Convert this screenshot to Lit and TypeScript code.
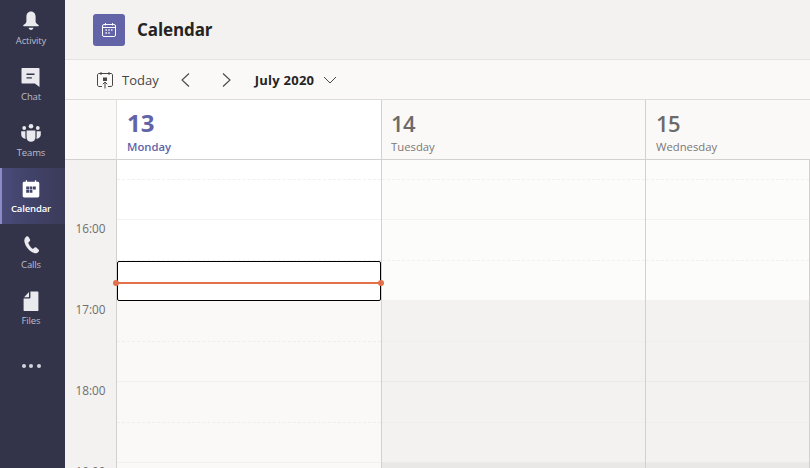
import { LitElement, html, css, svg } from "lit";
import { customElement } from "lit/decorators.js";

const icons: Record<string, unknown> = {
  bell: svg`<path d="M10 0.600c-3 0-4.600 2.300-4.600 5.200v4.800c0 1.100-.9 2.100-2.900 3.400-.5.3-.5 1.200.3 1.200h14.400c.8 0 .8-.9.3-1.200-2-1.300-2.900-2.300-2.900-3.400V5.800c0-2.900-1.600-5.200-4.600-5.200z"/><path d="M7.600 16.800h4.800c-.2 1.300-1.100 2.200-2.400 2.200s-2.200-.9-2.400-2.200z"/>`,
  chat: svg`<path fill-rule="evenodd" d="M1.500 1h16c.6 0 1 .4 1 1v18l-4.600-3.400H1.500c-.6 0-1-.4-1-1V2c0-.6.4-1 1-1zM5.500 6.600v1.300h8V6.600zm0 3.600v1.300h5.400v-1.300z"/>`,
  teams: svg`<circle cx="10" cy="3.200" r="2.300"/><circle cx="3.200" cy="5" r="1.900"/><circle cx="16.800" cy="5" r="1.900"/><path d="M5.600 7.400h8.800v7c0 2.500-2 4.400-4.400 4.400s-4.400-1.900-4.400-4.400z"/><path d="M.2 8.200h4.200v5.600c0 .8.100 1.400.4 2C2.300 15.600.2 14 .2 11.500zM15.600 8.200h4.200v3.300c0 2.500-2.100 4.100-4.600 4.300.3-.6.4-1.200.4-2z"/>`,
  cal: svg`<path fill-rule="evenodd" d="M4.800 1.200h1.300v1.500h7.800V1.200h1.300v1.500h1.500c1 0 1.600.7 1.600 1.600v12.400c0 1-.7 1.700-1.600 1.700H3.300c-1 0-1.600-.7-1.600-1.700V4.300c0-.9.6-1.600 1.600-1.600h1.500zM5.200 7.600v2.800h2.800V7.600zm3.400 0v2.800h2.800V7.600zm3.400 0v2.800h2.800V7.600zm-6.800 3.400v2.800h2.800V11zm3.400 0v2.800h2.800V11z"/>`,
  phone: svg`<path d="M5.400 1.400c.9-.5 1.700-.3 2.200.5l1.300 2.300c.5.8.3 1.500-.3 2.100l-1 1c-.3.3-.3.6-.2 1 .9 2.300 2.100 3.900 4 5.400.4.2.7.2 1-.1l1-.8c.7-.6 1.500-.6 2.100 0l2 1.800c.7.7.7 1.500 0 2.200-1.200 1.300-2.700 1.900-4.300 1.300C8.100 16 4.600 11.800 3.400 6.700c-.4-2.200.4-4.100 2-5.300z"/>`,
  file: svg`<path d="M9.400 0.600h7c.6 0 1 .4 1 1v17.600c0 .6-.4 1-1 1H3.600c-.6 0-1-.4-1-1V7.600h5.800c.6 0 1-.4 1-1z"/><path d="M8 1.100V5.800c0 .2-.2.400-.4.400H3.100z"/>`,
};

const nav = [
  ["bell", "Activity"],
  ["chat", "Chat"],
  ["teams", "Teams"],
  ["cal", "Calendar"],
  ["phone", "Calls"],
  ["file", "Files"],
];

const slots = [
  { h: 20, k: "dash" }, { h: 40, k: "solid" }, { h: 41, k: "dash" }, { h: 40, k: "solid" },
  { h: 41, k: "dash" }, { h: 40, k: "solid" }, { h: 41, k: "dash" }, { h: 40, k: "solid" },
];

@customElement("app-root")
export class AppRoot extends LitElement {
  static styles = css`
    :host { display: flex; width: 810px; height: 468px; overflow: hidden; font-family: "Open Sans", "Noto Sans", sans-serif; color: #252423; background: #f3f2f1; }
    .rail { width: 65px; flex: none; background: #33344a; display: flex; flex-direction: column; }
    .nav { height: 56px; box-sizing: border-box; display: flex; flex-direction: column; align-items: center; padding: 11px 3px 0 0; color: #bdbdc9; font-size: 9.500px; line-height: 13px; letter-spacing: -0.15px; }
    .nav svg { width: 20px; height: 20px; fill: #e9e9ee; margin-bottom: 3px; }
    .nav.active { color: #fff; background: linear-gradient(90deg, #4a4b78 0%, #3f4064 60%, #3b3c5a 100%); border-left: 2px solid #8b8cc7; padding-right: 5px; font-weight: 600; }
    .nav.active svg { fill: #fff; }
    .dots { display: flex; justify-content: center; gap: 3.500px; padding: 28px 3px 0 0; }
    .dots i { width: 4px; height: 4px; border-radius: 50%; background: #d4d4dc; }
    .main { flex: 1; min-width: 0; display: flex; flex-direction: column; }
    .head { height: 59px; flex: none; display: flex; align-items: center; gap: 12px; padding: 0 0 0 28px; border-bottom: 1px solid #e4e3e2; }
    .logo { width: 32px; height: 32px; border-radius: 3px; background: #6264a7; display: flex; align-items: center; justify-content: center; margin-top: 1px; }
    .logo svg { width: 16px; height: 16px; }
    .title { font-size: 17px; font-weight: 700; line-height: 22px; letter-spacing: -0.1px; margin-top: 1px; }
    .tools { height: 39px; flex: none; background: #faf9f8; border-bottom: 1px solid #dddcdb; display: flex; align-items: center; padding-left: 31px; font-size: 13px; color: #484644; }
    .today { width: 18px; height: 18px; margin-right: 8px; }
    .chev { width: 12px; height: 16px; }
    .prev { margin-left: 20px; }
    .next { margin-left: 30px; }
    .month { margin-left: 22px; font-weight: 700; color: #252423; letter-spacing: 0.25px; }
    .down { width: 14px; height: 8px; margin-left: 9px; }
    .cols { display: grid; grid-template-columns: 52px 265px 264px 1fr; }
    .dayhead { height: 60px; box-sizing: border-box; border-bottom: 1px solid #d2d1d0; background: #faf9f8; padding: 7px 0 0 10px; color: #6b6a69; }
    .dayhead.first { border-right: 1px solid #e1dfdd; }
    .dayhead.day { border-right: 1px solid #d2d1d0; }
    .dayhead.tue { padding-left: 9px; }
    .dayhead.on { background: #fff; color: #6264a7; }
    .num { font-size: 22px; line-height: 32px; font-weight: 600; letter-spacing: -0.6px; }
    .dayhead.on .num { font-weight: 700; font-size: 24px; letter-spacing: 0; }
    .dow { font-size: 11.300px; line-height: 16px; color: #7a7876; }
    .dayhead.on .dow { color: #6264a7; font-weight: 600; }
    .grid { height: 308px; position: relative; overflow: hidden; }
    .gutter { background: #f3f2f1; border-right: 1px solid #d2d1d0; padding-top: 60px; display: flex; flex-direction: column; align-items: center; font-size: 11.800px; color: #706e6c; }
    .gutter span { height: 81px; flex: none; line-height: 17px; }
    .col { border-right: 1px solid #d2d1d0; background: #fcfcfb; display: flex; flex-direction: column; }
    .col.on { background: #fff; }
    .slot { box-sizing: border-box; flex: none; }
    .slot.solid { border-bottom: 1px solid #f3f2f1; }
    .slot.dash { border-bottom: 1px dashed #f1f0ef; }
    .slot.after { background: #f3f2f1; }
    .slot.after.solid { border-bottom-color: #ebeae9; }
    .slot.after.dash { border-bottom: 1px solid #efeeed; }
    .col.on .slot.after { background: #faf9f8; }
    .col.on .slot.after.solid { border-bottom-color: #f1f0ef; }
    .col.on .slot.after.dash { border-bottom: 1px dashed #efeeed; }
    .rest { flex: 1; background: #e9e8e7; }
    .col.on .rest { background: #faf9f8; }
    .sel { position: absolute; left: 52px; top: 101px; width: 264px; height: 40px; box-sizing: border-box; border: 1px solid #000; border-radius: 2px; background: #fff; }
    .now { position: absolute; left: 51px; top: 122px; width: 265px; height: 2px; background: #e2714a; }
    .now::before, .now::after { content: ""; position: absolute; top: -2px; width: 6px; height: 6px; border-radius: 50%; background: #e2714a; }
    .now::before { left: -3px; }
    .now::after { right: -3px; }
  `;

  private column(on: boolean) {
    let y = 160;
    return html`<div class="col ${on ? "on" : ""}">
      ${slots.map((s) => {
        const after = y >= 300;
        y += s.h;
        return html`<div class="slot ${s.k} ${after ? "after" : ""}" style="height:${s.h}px"></div>`;
      })}
      <div class="rest"></div>
    </div>`;
  }

  render() {
    return html`
      <nav class="rail">
        ${nav.map(([ic, label]) => html`<div class="nav ${label === "Calendar" ? "active" : ""}">
          <svg viewBox="0 0 20 20">${icons[ic]}</svg><span>${label}</span>
        </div>`)}
        <div class="dots"><i></i><i></i><i></i></div>
      </nav>
      <div class="main">
        <header class="head">
          <div class="logo">
            <svg viewBox="0 0 16 16" fill="none" stroke="#fff" stroke-width="1">
              <rect x="1.500" y="2.500" width="13" height="12" rx="1.500"/>
              <path d="M1.500 5.500h13M4.500 1v2.500M11.500 1v2.500"/>
              <path stroke-width="1.400" d="M4.500 8h1.400M7.300 8h1.400M10.100 8h1.400M4.500 11h1.400M7.300 11h1.400"/>
            </svg>
          </div>
          <div class="title">Calendar</div>
        </header>
        <div class="tools">
          <svg class="today" viewBox="0 0 18 18" fill="none" stroke="#484644" stroke-width="1">
            <path d="M6 2.500H3c-.8 0-1.500.6-1.500 1.500v10c0 .8.700 1.500 1.500 1.500h3M12 2.500h3c.8 0 1.500.6 1.500 1.500v10c0 .8-.7 1.500-1.500 1.500h-3M6 2.500h6M5 1v3M13 1v3M9 17.500V11M6.800 13.200 9 11l2.200 2.200"/>
            <rect x="7" y="6.500" width="4" height="3.500" fill="#484644" stroke="none"/>
          </svg>
          <span>Today</span>
          <svg class="chev prev" viewBox="0 0 12 16" fill="none" stroke="#484644" stroke-width="1.100"><path d="M10 1.500 3 8l7 6.500"/></svg>
          <svg class="chev next" viewBox="0 0 12 16" fill="none" stroke="#484644" stroke-width="1.100"><path d="M2 1.500 9 8l-7 6.500"/></svg>
          <span class="month">July 2020</span>
          <svg class="down" viewBox="0 0 14 8" fill="none" stroke="#484644" stroke-width="1"><path d="M1 1l6 6 6-6"/></svg>
        </div>
        <div class="cols">
          <div class="dayhead first"></div>
          <div class="dayhead day on"><div class="num">13</div><div class="dow">Monday</div></div>
          <div class="dayhead day tue"><div class="num">14</div><div class="dow">Tuesday</div></div>
          <div class="dayhead"><div class="num">15</div><div class="dow">Wednesday</div></div>
        </div>
        <div class="cols grid">
          <div class="gutter"><span>16:00</span><span>17:00</span><span>18:00</span><span>19:00</span></div>
          ${this.column(true)}${this.column(false)}${this.column(false)}
          <div class="sel"></div>
          <div class="now"></div>
        </div>
      </div>
    `;
  }
}
